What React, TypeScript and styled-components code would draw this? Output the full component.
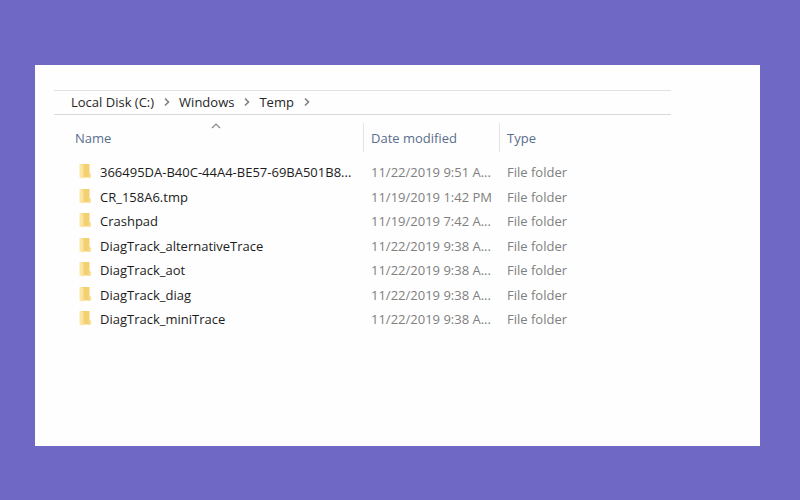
import React from "react";
import styled, { createGlobalStyle } from "styled-components";

const GlobalStyle = createGlobalStyle`
  *, *::before, *::after { box-sizing: border-box; }
  body {
    margin: 0;
    background: #6f69c5;
    font-family: "Open Sans", "Noto Sans", sans-serif;
    font-size: 13px;
    line-height: 16px;
    color: #1c1c1c;
  }
`;

const Page = styled.main`
  display: flex;
  min-height: 100vh;
  padding: 65px 40px 54px 35px;
`;

const Panel = styled.section`
  flex: 1;
  min-width: 0;
  padding: 25px 89px 25px 19px;
  background: #fefefe;
`;

const AddressBar = styled.nav`
  display: flex;
  align-items: center;
  height: 25px;
  padding: 0 0 2px 17px;
  border-top: 1px solid #e2e2e2;
  border-bottom: 1px solid #d9d9d9;
`;

const Crumb = styled.a`
  color: #262626;
  text-decoration: none;
  white-space: nowrap;
`;

const CrumbArrow = styled.svg`
  flex: none;
  width: 8px;
  height: 10px;
  margin: 0 8px 0 9px;
`;

const FileTable = styled.table`
  width: calc(100% - 14px);
  margin: 8px 0 0 14px;
  table-layout: fixed;
  border-collapse: separate;
  border-spacing: 0;
`;

const Column = styled.col<{ $width?: number }>`
  width: ${({ $width }) => ($width ? `${$width}px` : "auto")};
`;

const HeadCell = styled.th`
  position: relative;
  height: 29px;
  padding: 0 7px;
  border-right: 1px solid #e4e4e4;
  color: #5a6e8c;
  font-weight: 400;
  text-align: left;

  &:last-child { border-right: 0; }
`;

const SortButton = styled.button`
  padding: 0;
  border: 0;
  background: none;
  color: inherit;
  font: inherit;
`;

const SortCaret = styled.svg`
  position: absolute;
  top: 0;
  left: 50%;
  width: 10px;
  height: 6px;
  margin-left: -5px;
`;

const FileRows = styled.tbody`
  &::before {
    content: "";
    display: block;
    height: 8px;
  }
`;

const FileRow = styled.tr`
  height: 24px;
  &:nth-child(even) { height: 25px; }
`;

const Cell = styled.td<{ $muted?: boolean }>`
  padding: 0 0 0 7px;
  color: ${({ $muted }) => ($muted ? "#808080" : "#1c1c1c")};
  white-space: nowrap;
`;

const FileName = styled.span`
  display: flex;
  align-items: center;
  gap: 9px;
  padding-left: 4px;
`;

const FolderSvg = styled.svg`
  flex: none;
  width: 12px;
  height: 16px;
  margin-top: -2px;
`;

const FolderIcon = () => (
  <FolderSvg viewBox="0 0 12 16" aria-hidden="true">
    <path d="M2 1H10.5V10L11.5 11V14.5H2Z" fill="#f3d070" />
    <path d="M10 9.5L11.5 10.5V14.5H9Z" fill="#f7da84" />
    <path d="M0.5 1H2.5L4.5 2.5V13.5L3.5 15.5L0.5 14.5Z" fill="#fbe6a5" />
    <path d="M4.5 2.5V13.5L3.5 15.5V3.5Z" fill="#f8dc8c" />
  </FolderSvg>
);

const crumbs = ["Local Disk (C:)", "Windows", "Temp"];

const files = [
  { name: "366495DA-B40C-44A4-BE57-69BA501B8...", date: "11/22/2019 9:51 A..." },
  { name: "CR_158A6.tmp", date: "11/19/2019 1:42 PM" },
  { name: "Crashpad", date: "11/19/2019 7:42 A..." },
  { name: "DiagTrack_alternativeTrace", date: "11/22/2019 9:38 A..." },
  { name: "DiagTrack_aot", date: "11/22/2019 9:38 A..." },
  { name: "DiagTrack_diag", date: "11/22/2019 9:38 A..." },
  { name: "DiagTrack_miniTrace", date: "11/22/2019 9:38 A..." },
];

export default function App() {
  return (
    <>
      <GlobalStyle />
      <Page>
        <Panel>
          <AddressBar aria-label="Folder path">
            {crumbs.map((crumb) => (
              <React.Fragment key={crumb}>
                <Crumb href="#">{crumb}</Crumb>
                <CrumbArrow viewBox="0 0 8 10" aria-hidden="true">
                  <path d="M2 1.5L5.5 5L2 8.5" fill="none" stroke="#808080" strokeWidth="1.6" />
                </CrumbArrow>
              </React.Fragment>
            ))}
          </AddressBar>
          <FileTable>
            <colgroup>
              <Column $width={296} />
              <Column $width={136} />
              <Column />
            </colgroup>
            <thead>
              <tr>
                <HeadCell aria-sort="ascending">
                  <SortCaret viewBox="0 0 10 6" aria-hidden="true">
                    <path d="M1 5L5 1L9 5" fill="none" stroke="#8a8a8a" strokeWidth="1.2" />
                  </SortCaret>
                  <SortButton>Name</SortButton>
                </HeadCell>
                <HeadCell><SortButton>Date modified</SortButton></HeadCell>
                <HeadCell><SortButton>Type</SortButton></HeadCell>
              </tr>
            </thead>
            <FileRows>
              {files.map((file) => (
                <FileRow key={file.name}>
                  <Cell>
                    <FileName>
                      <FolderIcon />
                      {file.name}
                    </FileName>
                  </Cell>
                  <Cell $muted>{file.date}</Cell>
                  <Cell $muted>File folder</Cell>
                </FileRow>
              ))}
            </FileRows>
          </FileTable>
        </Panel>
      </Page>
    </>
  );
}
